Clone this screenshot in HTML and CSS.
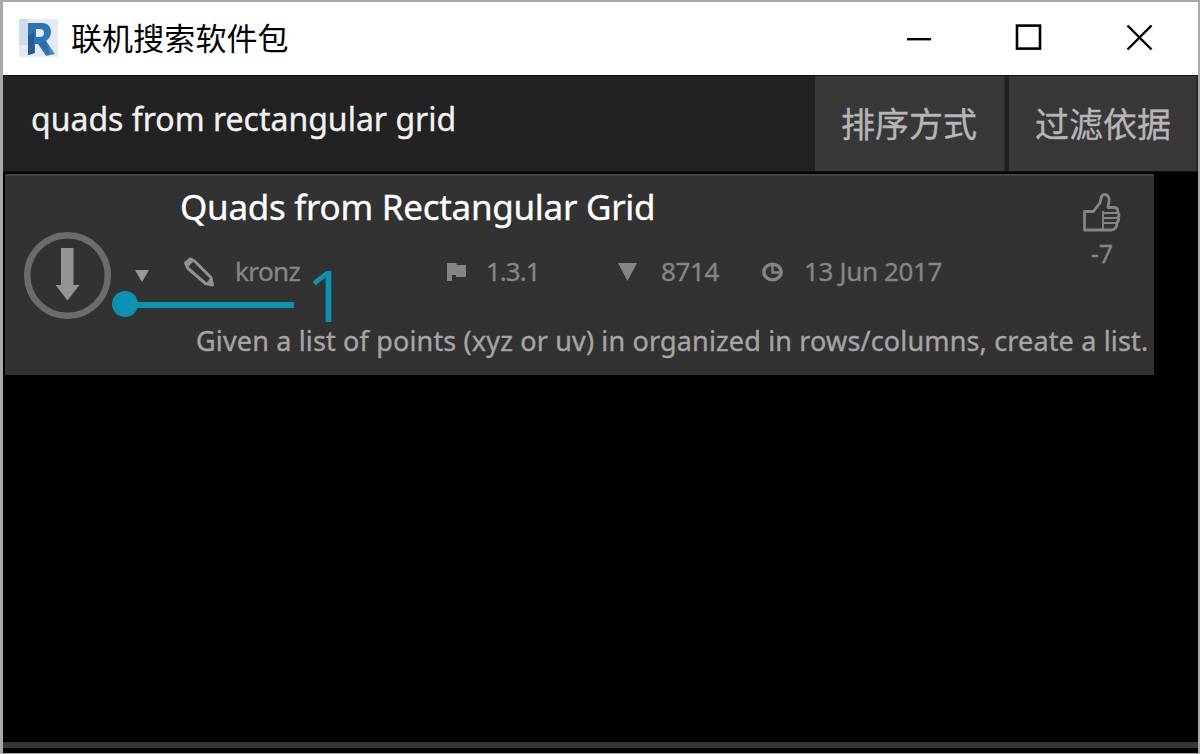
FILE: index.html
```html
<!DOCTYPE html>
<html lang="zh-CN">
<head>
<meta charset="utf-8">
<title>联机搜索软件包</title>
<link rel="stylesheet" href="styles.css">
</head>
<body>
<div class="window">
  <header class="titlebar">
    <svg class="logo" width="39" height="38" viewBox="0 0 39 38">
      <defs><linearGradient id="blue" x1="0" y1="0" x2="1" y2="1"><stop offset="0" stop-color="#2f6faa"/><stop offset=".5" stop-color="#2878bc"/><stop offset="1" stop-color="#5592c2"/></linearGradient></defs>
      <path fill="#e5eaf4" d="M0 0h39v38H0z"/>
      <path fill="#d0dcec" d="M0 0h9v26H0z"/>
      <path fill="url(#blue)" fill-rule="evenodd" d="M9 4h14c6 0 9 4 9 9 0 4-2 7-5 9l9 13-9 2-8-12h-3v9l-7 2zM17 10v8h4c3 0 4-2 4-4s-1-4-4-4z"/>
      <path fill="#285a90" d="M9 17l6-4v21l-6 2z"/>
      <path fill="#2c5681" d="M27 22l-7 2 8 12 3-1z" opacity=".5"/>
    </svg>
    <h1 class="window-title"><span class="t-window">联机搜索软件包</span></h1>
    <svg class="controls" width="224" height="30" viewBox="0 0 224 30" fill="none" stroke="#000">
      <path stroke-width="2.4" d="M1 16.2h24"/>
      <rect stroke-width="2.6" x="111" y="2.6" width="23" height="23"/>
      <path stroke-width="2.4" d="M221.500 2.500l24 24"/>
      <path stroke-width="2.4" d="M221.500 26.500l24-24"/>
    </svg>
  </header>
  <div class="toolbar">
    <div class="search"><span class="t-search">quads from rectangular grid</span></div>
    <div class="button"><span class="t-button">排序方式</span></div>
    <div class="button last"><span class="t-button">过滤依据</span></div>
  </div>
  <main class="results">
    <article class="card">
      <div class="download">
        <svg width="88" height="88" viewBox="0 0 88 88">
          <circle cx="43.500" cy="43.500" r="40.300" fill="none" stroke="#6c6c6c" stroke-width="6.500"/>
          <path fill="#949494" d="M37 16h12.500v37h6L43.500 68.500 31.500 53H37z"/>
        </svg>
        <svg class="caret" width="14" height="12" viewBox="0 0 14 12"><path fill="#999" d="M0 0h14L7 12z"/></svg>
      </div>
      <div class="info">
        <h2 class="name"><span class="t-name">Quads from Rectangular Grid</span></h2>
        <div class="meta">
          <div class="item author">
            <svg width="32" height="30" viewBox="0 0 32 30" fill="none" stroke="#929292" stroke-width="3" stroke-linejoin="round"><path d="M7 2L2.500 6 5 11.500 22.500 26.500 29.500 28 28 20.500 11.500 4z"/><path d="M4 8l6-6" stroke-width="4"/><path d="M24 26l4-5 2 7z" fill="#929292" stroke-width="1"/></svg>
            <span class="t-author">kronz</span>
          </div>
          <div class="item version">
            <svg width="19" height="18" viewBox="0 0 19 18"><path fill="#858585" d="M0 0h9.500v2H19v12H9v-2H5v6H0z"/></svg>
            <span class="t-version">1.3.1</span>
          </div>
          <div class="item count">
            <svg width="19" height="18" viewBox="0 0 19 18"><path fill="#858585" d="M0 0h19L9.500 18z"/></svg>
            <span class="t-count">8714</span>
          </div>
          <div class="item date">
            <svg width="21" height="20" viewBox="0 0 21 20" fill="none" stroke="#858585"><ellipse cx="10.500" cy="10" rx="8.700" ry="7.800" stroke-width="3.400"/><path d="M10.500 3v7.500H18" stroke-width="2.400"/></svg>
            <span class="t-date">13 Jun 2017</span>
          </div>
        </div>
        <p class="description"><span class="t-desc">Given a list of points (xyz or uv) in organized in rows/columns, create a list.</span></p>
      </div>
      <div class="votes">
        <svg width="38" height="39" viewBox="0 0 38 39" fill="none" stroke="#858585" stroke-width="2.800" stroke-linejoin="round"><path d="M1.500 18.500h9C13 14 17 12 17.500 8c.5-4 1-6.500 4-6.500 4 0 5 4 4.500 7l-1 6h6c4 0 4 3 3.500 5 2 1 2 4 .5 5 1 2 .5 4-1 5 0 5-2 7.500-6 7.500H1.500z"/><path d="M20 18v18M20 20h14M20 25h15M20 30h14" stroke-width="1.800"/></svg>
        <span class="t-votes">-7</span>
      </div>
    </article>
    <div class="callout">
      <svg width="182" height="26" viewBox="0 0 182 26"><path fill="#0d91b1" d="M13 11h169v6H13z"/><circle cx="13" cy="13" r="13" fill="#0d91b1"/></svg>
      <span class="t-callout">1</span>
    </div>
  </main>
  <footer class="statusbar"></footer>
</div>
</body>
</html>
```
FILE: styles.css
```css
* { box-sizing: border-box; }
body { margin: 0; background: #000; font-family: "Noto Sans", "Noto Sans CJK SC", sans-serif; }
h1, h2, p { margin: 0; font-weight: 400; }
svg { display: block; flex: none; overflow: visible; }
span { white-space: nowrap; -webkit-text-stroke: .35px currentColor; }
.window { width: 1200px; height: 754px; display: flex; flex-direction: column; border: solid #a9a9a9; border-width: 2px 2px 1px 3px; background: #000; overflow: hidden; }
.titlebar { height: 73px; flex: none; display: flex; align-items: center; background: #fff; padding: 0 0 2px 16px; }
.window-title { margin-left: 13px; line-height: 40px; font-size: 31px; color: #000; }
.t-window { font-family: "Noto Sans CJK SC", sans-serif; letter-spacing: .1px; -webkit-text-stroke: 0; }
.controls { margin-left: auto; margin-right: 68px; }
.toolbar { height: 97px; flex: none; display: flex; border-top: 1px solid #111; border-bottom: 1px solid #111; background: #222; }
.search { width: 812px; padding: 20px 0 0 28px; font-size: 32px; line-height: 46px; color: #f2f2f2; }
.button { width: 190px; padding: 22px 0 0 26px; border-right: 1px solid #2d2d2d; background: #383838; font-family: "Noto Sans CJK SC", sans-serif; font-size: 34px; line-height: 50px; color: #b6b6b6; }
.last { width: 188px; margin-left: 4px; }
.results { position: relative; flex: 1; padding: 2px 0 0 2px; }
.card { display: flex; width: 1149px; height: 201px; background: #323232; border-top: 2px solid #424242; }
.download { width: 175px; display: flex; align-items: flex-start; padding: 56px 0 0 19px; }
.caret { margin: 38px 0 0 23px; }
.info { width: 880px; display: flex; flex-direction: column; }
.name { height: 78px; padding-top: 6px; font-size: 35px; line-height: 50px; color: #fff; letter-spacing: -.28px; }
.meta { height: 36px; display: flex; align-items: center; font-size: 26px; line-height: 36px; color: #858585; }
.meta span { margin-top: -2px; }
.t-author { letter-spacing: -.6px; }
.t-version { letter-spacing: -1px; }
.t-count { letter-spacing: -.4px; }
.t-date { letter-spacing: -.35px; }
.item { display: flex; align-items: center; }
.author { width: 267px; padding-left: 3px; gap: 20px; }
.version { width: 171px; gap: 20px; }
.count { width: 144px; gap: 24px; }
.date { gap: 21px; }
.description { padding: 33px 0 0 16px; font-size: 27px; line-height: 36px; color: #a5a5a5; letter-spacing: .155px; }
.votes { width: 84px; display: flex; flex-direction: column; align-items: center; padding: 17px 0 0 0; font-size: 25px; line-height: 34px; color: #858585; }
.t-votes { margin-top: 4px; }
.callout { position: absolute; left: 109px; top: 119px; display: flex; align-items: center; }
.t-callout { position: relative; margin-left: 12px; font-family: "Open Sans", sans-serif; font-weight: 400; font-size: 72px; line-height: 26px; color: #0d91b1; top: -10px; -webkit-text-stroke: 0; }
.statusbar { height: 6px; margin-bottom: 5px; background: #363636; flex: none; }
```
